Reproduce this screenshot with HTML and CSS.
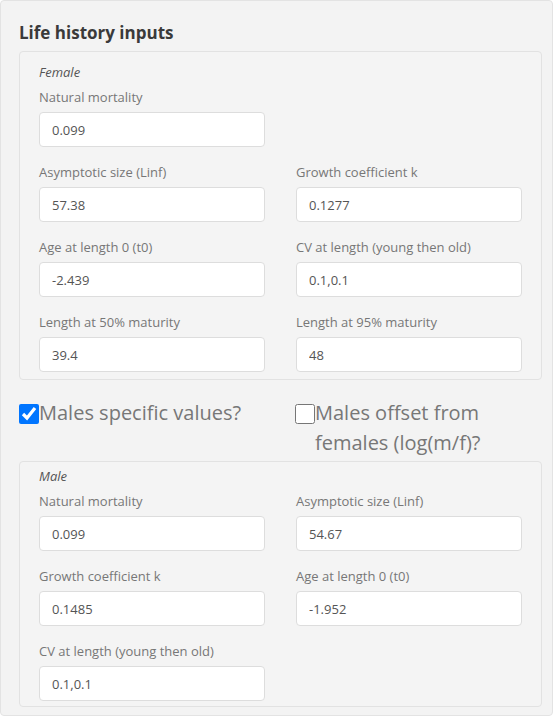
FILE: index.html
```html
<!DOCTYPE html>
<html>
<head>
<meta charset="utf-8">
<link rel="stylesheet" href="styles.css">
</head>
<body>
<div class="well">
  <h3 class="title">Life history inputs</h3>
  <div class="panel panel-female">
    <div class="legend">Female</div>
    <div class="grid">
      <div class="field"><label>Natural mortality</label><input type="text" value="0.099"></div>
      <div></div>
      <div class="field"><label>Asymptotic size (Linf)</label><input type="text" value="57.38"></div>
      <div class="field"><label>Growth coefficient k</label><input type="text" value="0.1277"></div>
      <div class="field"><label>Age at length 0 (t0)</label><input type="text" value="-2.439"></div>
      <div class="field"><label>CV at length (young then old)</label><input type="text" value="0.1,0.1"></div>
      <div class="field"><label>Length at 50% maturity</label><input type="text" value="39.4"></div>
      <div class="field"><label>Length at 95% maturity</label><input type="text" value="48"></div>
    </div>
  </div>
  <div class="checks">
    <label class="check"><input type="checkbox" checked><span>Males specific values?</span></label>
    <label class="check"><input type="checkbox"><span>Males offset from females (log(m/f)?</span></label>
  </div>
  <div class="panel panel-male">
    <div class="legend">Male</div>
    <div class="grid">
      <div class="field"><label>Natural mortality</label><input type="text" value="0.099"></div>
      <div class="field"><label>Asymptotic size (Linf)</label><input type="text" value="54.67"></div>
      <div class="field"><label>Growth coefficient k</label><input type="text" value="0.1485"></div>
      <div class="field"><label>Age at length 0 (t0)</label><input type="text" value="-1.952"></div>
      <div class="field"><label>CV at length (young then old)</label><input type="text" value="0.1,0.1"></div>
    </div>
  </div>
</div>
</body>
</html>
```

FILE: styles.css
```css
* { box-sizing: border-box; }
html, body { margin: 0; padding: 0; background: #ffffff; }
body { font-family: "Open Sans", "DejaVu Sans", sans-serif; }

.well {
  width: 553px;
  height: 716px;
  background: #f3f3f3;
  border: 1px solid #e3e3e3;
  border-radius: 4px;
  padding: 20px 11px 6px 18px;
}

.title {
  margin: 0 0 6px 0;
  font-size: 17px;
  line-height: 24px;
  font-weight: 700;
  color: #3a3a3a;
}

.panel {
  width: 523px;
  border: 1px solid #e2e2e2;
  border-radius: 4px;
  background: #f4f4f4;
  padding: 10px 19px 7px 19px;
}

.panel-male { padding-top: 4px; padding-bottom: 5px; margin-top: 3px; }

.legend {
  font-style: italic;
  font-size: 13px;
  line-height: 20px;
  color: #555555;
  margin-bottom: 5px;
}

.grid {
  display: grid;
  grid-template-columns: 1fr 1fr;
  column-gap: 31px;
  row-gap: 15px;
}

.field label {
  display: block;
  font-size: 13px;
  line-height: 20px;
  color: #777777;
  margin-bottom: 5px;
}

.field input {
  display: block;
  width: 100%;
  height: 35px;
  border: 1px solid #dddddd;
  border-radius: 4px;
  background: #ffffff;
  padding: 0 12px;
  font-family: "Open Sans", "DejaVu Sans", sans-serif;
  font-size: 13px;
  color: #555555;
  outline: none;
}

.checks {
  display: grid;
  grid-template-columns: 246px 246px;
  column-gap: 30px;
  margin-top: 18px;
}

.check {
  display: flex;
  align-items: flex-start;
  font-size: 20px;
  line-height: 30px;
  color: #777777;
}

.check input {
  width: 20px;
  height: 20px;
  margin: 6px 0 0 0;
  flex: none;
}
```
